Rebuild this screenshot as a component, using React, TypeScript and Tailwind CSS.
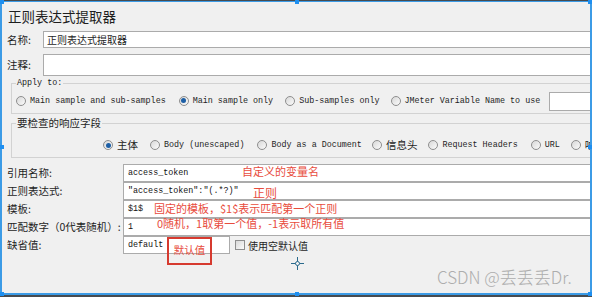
import React from "react";

const cjk = "font-['Noto_Sans_CJK_SC','Noto_Sans',sans-serif]";
const mono = "font-['Liberation_Mono',monospace]";

function Radio({ checked }: { checked?: boolean }) {
  return (
    <span className="flex h-[10px] w-[10px] shrink-0 items-center justify-center rounded-full border border-[#8e8e8e] bg-gradient-to-br from-[#d8d8d8] to-[#fbfbfb]">
      {checked && <span className="h-[5px] w-[5px] rounded-full bg-[#1d5fa6]" />}
    </span>
  );
}

function Option({ label, checked, ml, cn }: { label: string; checked?: boolean; ml: string; cn?: boolean }) {
  return (
    <div className={`flex shrink-0 items-center ${ml}`}>
      <Radio checked={checked} />
      <span className={`ml-[4px] whitespace-nowrap ${cn ? `${cjk} text-[10.5px]` : `${mono} text-[8.4px]`}`}>{label}</span>
    </div>
  );
}

const applyTo = [
  { label: "Main sample and sub-samples", ml: "ml-0" },
  { label: "Main sample only", ml: "ml-[13px]", checked: true },
  { label: "Sub-samples only", ml: "ml-[12px]" },
  { label: "JMeter Variable Name to use", ml: "ml-[11px]" },
];

const fields = [
  { label: "主体", ml: "ml-0", checked: true, cn: true },
  { label: "Body (unescaped)", ml: "ml-[12px]" },
  { label: "Body as a Document", ml: "ml-[13px]" },
  { label: "信息头", ml: "ml-[10px]", cn: true },
  { label: "Request Headers", ml: "ml-[11px]" },
  { label: "URL", ml: "ml-[13px]" },
  { label: "响应代码", ml: "ml-[11px]", cn: true },
];

const rows = [
  { label: "引用名称:", value: "access_token" },
  { label: "正则表达式:", value: "\"access_token\":\"(.*?)\"" },
  { label: "模板:", value: "$1$" },
  { label: "匹配数字（0代表随机）:", value: "1" },
];

export default function App() {
  return (
    <div className="relative h-[297px] w-[592px] overflow-hidden bg-[#464b50] pt-[1px] pb-[2px]">
      <div className="h-full overflow-hidden border-t border-r-2 border-b-2 border-l-2 border-[#3c9be6] bg-[#f0f0f0]">
        <div className="w-[660px] pl-[5px] text-[#1e1e1e]">
          {/* title */}
          <div className={`flex h-[28px] items-center pl-[1px] text-[13.5px] ${cjk}`}>正则表达式提取器</div>

          {/* name / comment */}
          <div className="mt-[1px] flex h-[17px] items-center">
            <span className={`w-[36px] text-[10.5px] ${cjk}`}>名称:</span>
            <div className={`flex h-full flex-1 items-center border border-[#ababab] bg-white pl-[3px] text-[10px] ${cjk}`}>正则表达式提取器</div>
          </div>
          <div className="mt-[6px] flex h-[22px] items-start">
            <span className={`w-[36px] pt-[3px] text-[10.5px] ${cjk}`}>注释:</span>
            <div className="h-full flex-1 border border-[#ababab] bg-white" />
          </div>

          {/* apply to */}
          <fieldset className="mt-[2px] ml-[4px] border border-[#d2d2d2] pb-[3px] pl-[4px]">
            <legend className={`px-[1px] text-[8.4px] leading-[10px] ${mono}`}>Apply to:</legend>
            <div className="mt-[4px] flex h-[18px] items-center">
              {applyTo.map((o) => (
                <Option key={o.label} {...o} />
              ))}
              <div className="ml-[9px] h-[19px] w-[80px] shrink-0 border border-[#ababab] bg-white" />
            </div>
          </fieldset>

          {/* response field */}
          <fieldset className="mt-[3px] ml-[4px] border border-[#d2d2d2] pb-[3px] pl-[4px]">
            <legend className={`px-[1px] text-[10.5px] leading-[12px] ${cjk}`}>要检查的响应字段</legend>
            <div className="mt-[7px] flex h-[18px] items-center pl-[87px]">
              {fields.map((o) => (
                <Option key={o.label} {...o} />
              ))}
            </div>
          </fieldset>

          {/* extractor fields */}
          <div className="mt-[6px]">
            {rows.map((r) => (
              <div key={r.label} className="flex h-[18px] items-center">
                <span className={`w-[116px] shrink-0 whitespace-nowrap text-[10.5px] ${cjk}`}>{r.label}</span>
                <div className={`flex h-full flex-1 items-center border border-[#ababab] bg-white pl-[4px] text-[8.4px] text-[#111] ${mono}`}>
                  {r.value}
                </div>
              </div>
            ))}
            <div className="flex h-[18px] items-center">
              <span className={`w-[116px] shrink-0 text-[10.5px] ${cjk}`}>缺省值:</span>
              <div className={`flex h-full w-[107px] items-center border border-[#ababab] bg-white pl-[4px] text-[8.4px] text-[#111] ${mono}`}>
                default
              </div>
              <span className="ml-[5px] h-[10px] w-[10px] border border-[#8e8e8e] bg-gradient-to-br from-[#d8d8d8] to-[#fbfbfb]" />
              <span className={`ml-[3px] text-[10px] ${cjk}`}>使用空默认值</span>
            </div>
          </div>
        </div>
      </div>

      {/* annotations */}
      <div className={`absolute top-[164px] left-[242px] text-[11px] leading-[14px] text-[#e84c3d] ${cjk}`}>自定义的变量名</div>
      <div className={`absolute top-[186px] left-[253px] text-[12px] leading-[14px] text-[#e84c3d] ${cjk}`}>正则</div>
      <div className={`absolute top-[201px] left-[154px] text-[11px] leading-[14px] text-[#e84c3d] ${cjk}`}>固定的模板，$1$表示匹配第一个正则</div>
      <div className={`absolute top-[216px] left-[157px] text-[11px] leading-[14px] text-[#e84c3d] ${cjk}`}>0随机，1取第一个值，-1表示取所有值</div>
      <div className={`absolute top-[237px] left-[167px] flex h-[28px] w-[45px] items-center justify-center border-2 border-[#d63a2f] pb-[2px] text-[10.5px] text-[#e84c3d] ${cjk}`}>
        默认值
      </div>

      {/* crosshair */}
      <svg className="absolute top-[257px] left-[291px]" width="13" height="13" viewBox="0 0 13 13">
        <line x1="0" y1="6.5" x2="4.5" y2="6.5" stroke="#2a6a8c" strokeWidth="1" />
        <line x1="8.5" y1="6.5" x2="13" y2="6.5" stroke="#2a6a8c" strokeWidth="1" />
        <line x1="6.5" y1="0" x2="6.5" y2="4.5" stroke="#2a6a8c" strokeWidth="1" />
        <line x1="6.5" y1="8.5" x2="6.5" y2="13" stroke="#2a6a8c" strokeWidth="1" />
        <circle cx="6.5" cy="6.5" r="2" fill="none" stroke="#2a6a8c" strokeWidth="1" />
      </svg>

      {/* watermark */}
      <div className={`absolute top-[267px] left-[437px] text-[17px] font-light leading-[20px] text-[#adadad] ${cjk}`}>CSDN @丢丢丢Dr.</div>

      {/* selection handles */}
      <span className="absolute top-0 left-0 h-[4px] w-[4px] bg-[#1e8ff0]" />
      <span className="absolute top-0 left-[295px] h-[4px] w-[4px] bg-[#1e8ff0]" />
      <span className="absolute top-0 right-0 h-[4px] w-[4px] bg-[#1e8ff0]" />
      <span className="absolute top-[145px] left-0 h-[4px] w-[4px] bg-[#1e8ff0]" />
      <span className="absolute top-[145px] right-0 h-[4px] w-[4px] bg-[#1e8ff0]" />
      <span className="absolute top-[292px] left-0 h-[4px] w-[4px] bg-[#1e8ff0]" />
      <span className="absolute top-[292px] left-[295px] h-[4px] w-[4px] bg-[#1e8ff0]" />
      <span className="absolute top-[292px] right-0 h-[4px] w-[4px] bg-[#1e8ff0]" />
    </div>
  );
}
